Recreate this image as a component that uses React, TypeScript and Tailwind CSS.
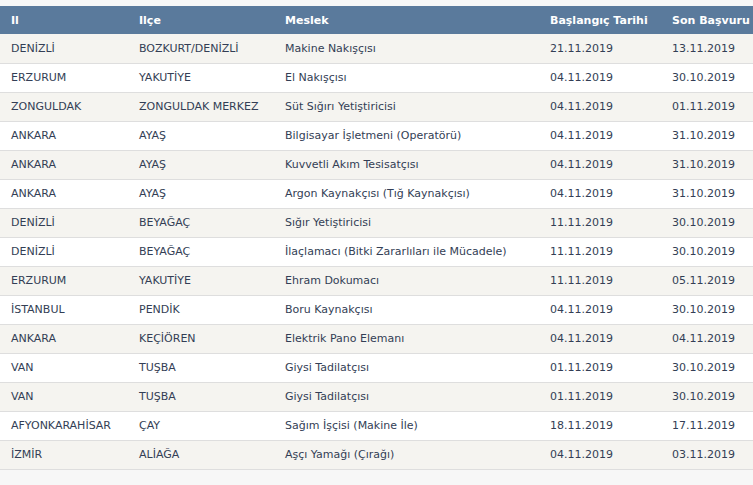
const rows = [
  ['DENİZLİ', 'BOZKURT/DENİZLİ', 'Makine Nakışçısı', '21.11.2019', '13.11.2019'],
  ['ERZURUM', 'YAKUTİYE', 'El Nakışçısı', '04.11.2019', '30.10.2019'],
  ['ZONGULDAK', 'ZONGULDAK MERKEZ', 'Süt Sığırı Yetiştiricisi', '04.11.2019', '01.11.2019'],
  ['ANKARA', 'AYAŞ', 'Bilgisayar İşletmeni (Operatörü)', '04.11.2019', '31.10.2019'],
  ['ANKARA', 'AYAŞ', 'Kuvvetli Akım Tesisatçısı', '04.11.2019', '31.10.2019'],
  ['ANKARA', 'AYAŞ', 'Argon Kaynakçısı (Tığ Kaynakçısı)', '04.11.2019', '31.10.2019'],
  ['DENİZLİ', 'BEYAĞAÇ', 'Sığır Yetiştiricisi', '11.11.2019', '30.10.2019'],
  ['DENİZLİ', 'BEYAĞAÇ', 'İlaçlamacı (Bitki Zararlıları ile Mücadele)', '11.11.2019', '30.10.2019'],
  ['ERZURUM', 'YAKUTİYE', 'Ehram Dokumacı', '11.11.2019', '05.11.2019'],
  ['İSTANBUL', 'PENDİK', 'Boru Kaynakçısı', '04.11.2019', '30.10.2019'],
  ['ANKARA', 'KEÇİÖREN', 'Elektrik Pano Elemanı', '04.11.2019', '04.11.2019'],
  ['VAN', 'TUŞBA', 'Giysi Tadilatçısı', '01.11.2019', '30.10.2019'],
  ['VAN', 'TUŞBA', 'Giysi Tadilatçısı', '01.11.2019', '30.10.2019'],
  ['AFYONKARAHİSAR', 'ÇAY', 'Sağım İşçisi (Makine İle)', '18.11.2019', '17.11.2019'],
  ['İZMİR', 'ALİAĞA', 'Aşçı Yamağı (Çırağı)', '04.11.2019', '03.11.2019'],
]

const headers = ['Il', 'Ilçe', 'Meslek', 'Başlangıç Tarihi', 'Son Başvuru']

export default function App() {
  return (
    <div
      className="h-[485px] w-[753px] overflow-hidden bg-[#f7f7f7] pt-[6px]"
      style={{ fontFamily: '"DejaVu Sans", Verdana, sans-serif' }}
    >
      <table className="w-[753px] table-fixed border-collapse text-[11px]">
        <colgroup>
          <col className="w-[128px]" />
          <col className="w-[146px]" />
          <col className="w-[265px]" />
          <col className="w-[122px]" />
          <col className="w-[92px]" />
        </colgroup>
        <thead>
          <tr className="h-[28px] bg-[#5a7a9c] text-white">
            {headers.map((h) => (
              <th key={h} className="whitespace-nowrap pl-[11px] pt-[2px] text-left font-bold">
                {h}
              </th>
            ))}
          </tr>
        </thead>
        <tbody>
          {rows.map((r, i) => (
            <tr
              key={i}
              className={`h-[29px] border-b border-[#dedede] text-[#333e55] ${
                i % 2 === 0 ? 'bg-[#f5f4f0]' : 'bg-white'
              }`}
            >
              {r.map((c, j) => (
                <td key={j} className="whitespace-nowrap pl-[11px] pt-[2px]">
                  {c}
                </td>
              ))}
            </tr>
          ))}
        </tbody>
      </table>
    </div>
  )
}
